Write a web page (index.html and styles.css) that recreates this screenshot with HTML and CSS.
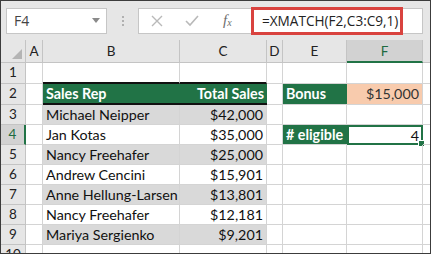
FILE: index.html
```html
<!DOCTYPE html>
<html lang="en">
<head>
  <meta charset="UTF-8" />
  <title>XMATCH example</title>
  <link rel="stylesheet" href="styles.css">
</head>
<body>
  <div class="app">
    <div class="formula-bar">
      <div class="name-box">
        <span>F4</span>
        <svg class="caret" width="8" height="5" viewBox="0 0 8 5"><path d="M0 0h8L4 5z" fill="#8a8a8a"/></svg>
      </div>
      <div class="grip"><i></i><i></i><i></i></div>
      <div class="formula-box">
        <div class="fb-icons">
          <svg width="12" height="12" viewBox="0 0 12 12"><path d="M1 1l10 10M11 1L1 11" stroke="#b9b9b9" stroke-width="1.4" fill="none"/></svg>
          <svg width="14" height="12" viewBox="0 0 14 12"><path d="M1 6l4 4 8-9" stroke="#b9b9b9" stroke-width="1.6" fill="none"/></svg>
          <span class="fx">f<sub>x</sub></span>
        </div>
        <div class="formula">=XMATCH(F2,C3:C9,1)</div>
      </div>
    </div>

    <div class="sheet">
      <div class="corner"><svg width="10" height="10" viewBox="0 0 10 10"><path d="M10 0v10H0z" fill="#b4b4b4"/></svg></div>
      <div class="ch">A</div>
      <div class="ch">B</div>
      <div class="ch">C</div>
      <div class="ch">D</div>
      <div class="ch">E</div>
      <div class="ch sel">F</div>
      <div class="ch last"></div>

      <div class="rh">1</div>
      <div class="c"></div><div class="c top-b"></div><div class="c top-b"></div><div class="c"></div><div class="c"></div><div class="c"></div><div class="c last"></div>

      <div class="rh">2</div>
      <div class="c"></div>
      <div class="c head left-b">Sales Rep</div>
      <div class="c head num right-b">Total Sales</div>
      <div class="c"></div>
      <div class="c label">Bonus</div>
      <div class="c bonus num">$15,000</div>
      <div class="c last"></div>

      <div class="rh">3</div>
      <div class="c"></div><div class="c band">Michael Neipper</div><div class="c band num">$42,000</div>
      <div class="c"></div><div class="c"></div><div class="c"></div><div class="c last"></div>

      <div class="rh sel">4</div>
      <div class="c"></div><div class="c">Jan Kotas</div><div class="c num">$35,000</div>
      <div class="c"></div><div class="c label">#&nbsp;eligible</div><div class="c num active">4<span class="handle"></span></div><div class="c last"></div>

      <div class="rh">5</div>
      <div class="c"></div><div class="c band">Nancy Freehafer</div><div class="c band num">$25,000</div>
      <div class="c"></div><div class="c"></div><div class="c"></div><div class="c last"></div>

      <div class="rh">6</div>
      <div class="c"></div><div class="c">Andrew Cencini</div><div class="c num">$15,901</div>
      <div class="c"></div><div class="c"></div><div class="c"></div><div class="c last"></div>

      <div class="rh">7</div>
      <div class="c"></div><div class="c band">Anne Hellung-Larsen</div><div class="c band num">$13,801</div>
      <div class="c"></div><div class="c"></div><div class="c"></div><div class="c last"></div>

      <div class="rh">8</div>
      <div class="c"></div><div class="c">Nancy Freehafer</div><div class="c num">$12,181</div>
      <div class="c"></div><div class="c"></div><div class="c"></div><div class="c last"></div>

      <div class="rh">9</div>
      <div class="c"></div><div class="c band">Mariya Sergienko</div><div class="c band num">$9,201</div>
      <div class="c"></div><div class="c"></div><div class="c"></div><div class="c last"></div>

      <div class="rh">10</div>
      <div class="c"></div><div class="c"></div><div class="c"></div><div class="c"></div><div class="c"></div><div class="c"></div><div class="c last"></div>
    </div>
  </div>
</body>
</html>
```

FILE: styles.css
```css
body {
  margin: 0;
  background: #fff;
  font-family: "Open Sans", "Liberation Sans", sans-serif;
}
.app {
  width: 431px;
  height: 254px;
  box-sizing: border-box;
  border: 1px solid #3c3c3c;
  background: #e6e6e6;
  overflow: hidden;
}
.formula-bar {
  height: 39px;
  display: flex;
  align-items: center;
  padding: 0 0 0 5px;
}
.name-box {
  background: #fff;
  border: 1px solid #c6c6c6;
  display: flex;
  align-items: center;
  justify-content: space-between;
  padding: 0 6px 0 7px;
  box-sizing: border-box;
  width: 101px;
  height: 26px;
  font-size: 14px;
  color: #444;
}
.grip {
  width: 31px;
  display: flex;
  flex-direction: column;
  align-items: center;
  gap: 2px;
}
.grip i {
  width: 2px;
  height: 2px;
  background: #b0b0b0;
}
.formula-box {
  width: 285px;
  height: 26px;
  box-sizing: border-box;
  background: #fff;
  border: 1px solid #c6c6c6;
  display: flex;
  align-items: center;
}
.fb-icons {
  width: 112px;
  display: flex;
  align-items: center;
  padding-left: 12px;
  gap: 22px;
  box-sizing: border-box;
}
.fx {
  font-family: "Liberation Serif", serif;
  font-style: italic;
  color: #6d6d6d;
  font-size: 15px;
  margin-left: 2px;
}
.fx sub {
  font-size: 10px;
  vertical-align: -1px;
}
.formula {
  width: 152px;
  height: 28px;
  box-sizing: border-box;
  border: 3px solid #d9433f;
  font-size: 13.6px;
  line-height: 21px;
  padding-left: 8px;
  color: #222;
  background: #fff;
}

.sheet {
  display: grid;
  grid-template-columns: 25px 17px 137px 87px 16px 64px 76px 1fr;
  grid-template-rows: 23px 21px 21px repeat(7, 20px) 1fr;
  height: 213px;
  background: #fff;
  font-family: "Lato", "Open Sans", sans-serif;
  font-size: 14.3px;
  color: #111;
}
.corner, .ch, .rh {
  background: #e6e6e6;
  border-right: 1px solid #c4c4c4;
  border-bottom: 1px solid #c4c4c4;
  box-sizing: border-box;
}
.corner {
  display: flex;
  align-items: flex-end;
  justify-content: flex-end;
  padding: 0 3px 3px 0;
}
.ch {
  text-align: center;
  line-height: 22px;
  font-size: 13.5px;
  color: #222;
}
.ch.sel {
  background: #d2d2d2;
  border-bottom: 2px solid #217346;
  color: #1e6b40;
}
.ch.last {
  border-right: none;
}
.rh {
  text-align: center;
  font-size: 13.5px;
  line-height: 19px;
  color: #222;
}
.rh.sel {
  background: #d2d2d2;
  border-right: 2px solid #217346;
  color: #1e6b40;
}
.c {
  border-right: 1px solid #d4d4d4;
  border-bottom: 1px solid #d4d4d4;
  box-sizing: border-box;
  padding: 0 3px;
  line-height: 19px;
  white-space: nowrap;
  position: relative;
}
.c.last {
  border-right: none;
}
.num {
  text-align: right;
}
.band {
  background: #d9d9d9;
}
.top-b {
  border-bottom: 2px solid #111;
}
.head {
  background: #217346;
  color: #fff;
  font-weight: bold;
  border-right: none;
  border-bottom: 2px solid #111;
}
.label {
  background: #217346;
  color: #fff;
  font-weight: bold;
  border-right: none;
}
.bonus {
  background: #f8cbad;
  color: #333;
}
.active {
  border: 2px solid #217346;
  line-height: 17px;
  padding-right: 2px;
}
.handle {
  position: absolute;
  right: -4px;
  bottom: -4px;
  width: 5px;
  height: 5px;
  background: #217346;
  border: 1px solid #fff;
}
```
